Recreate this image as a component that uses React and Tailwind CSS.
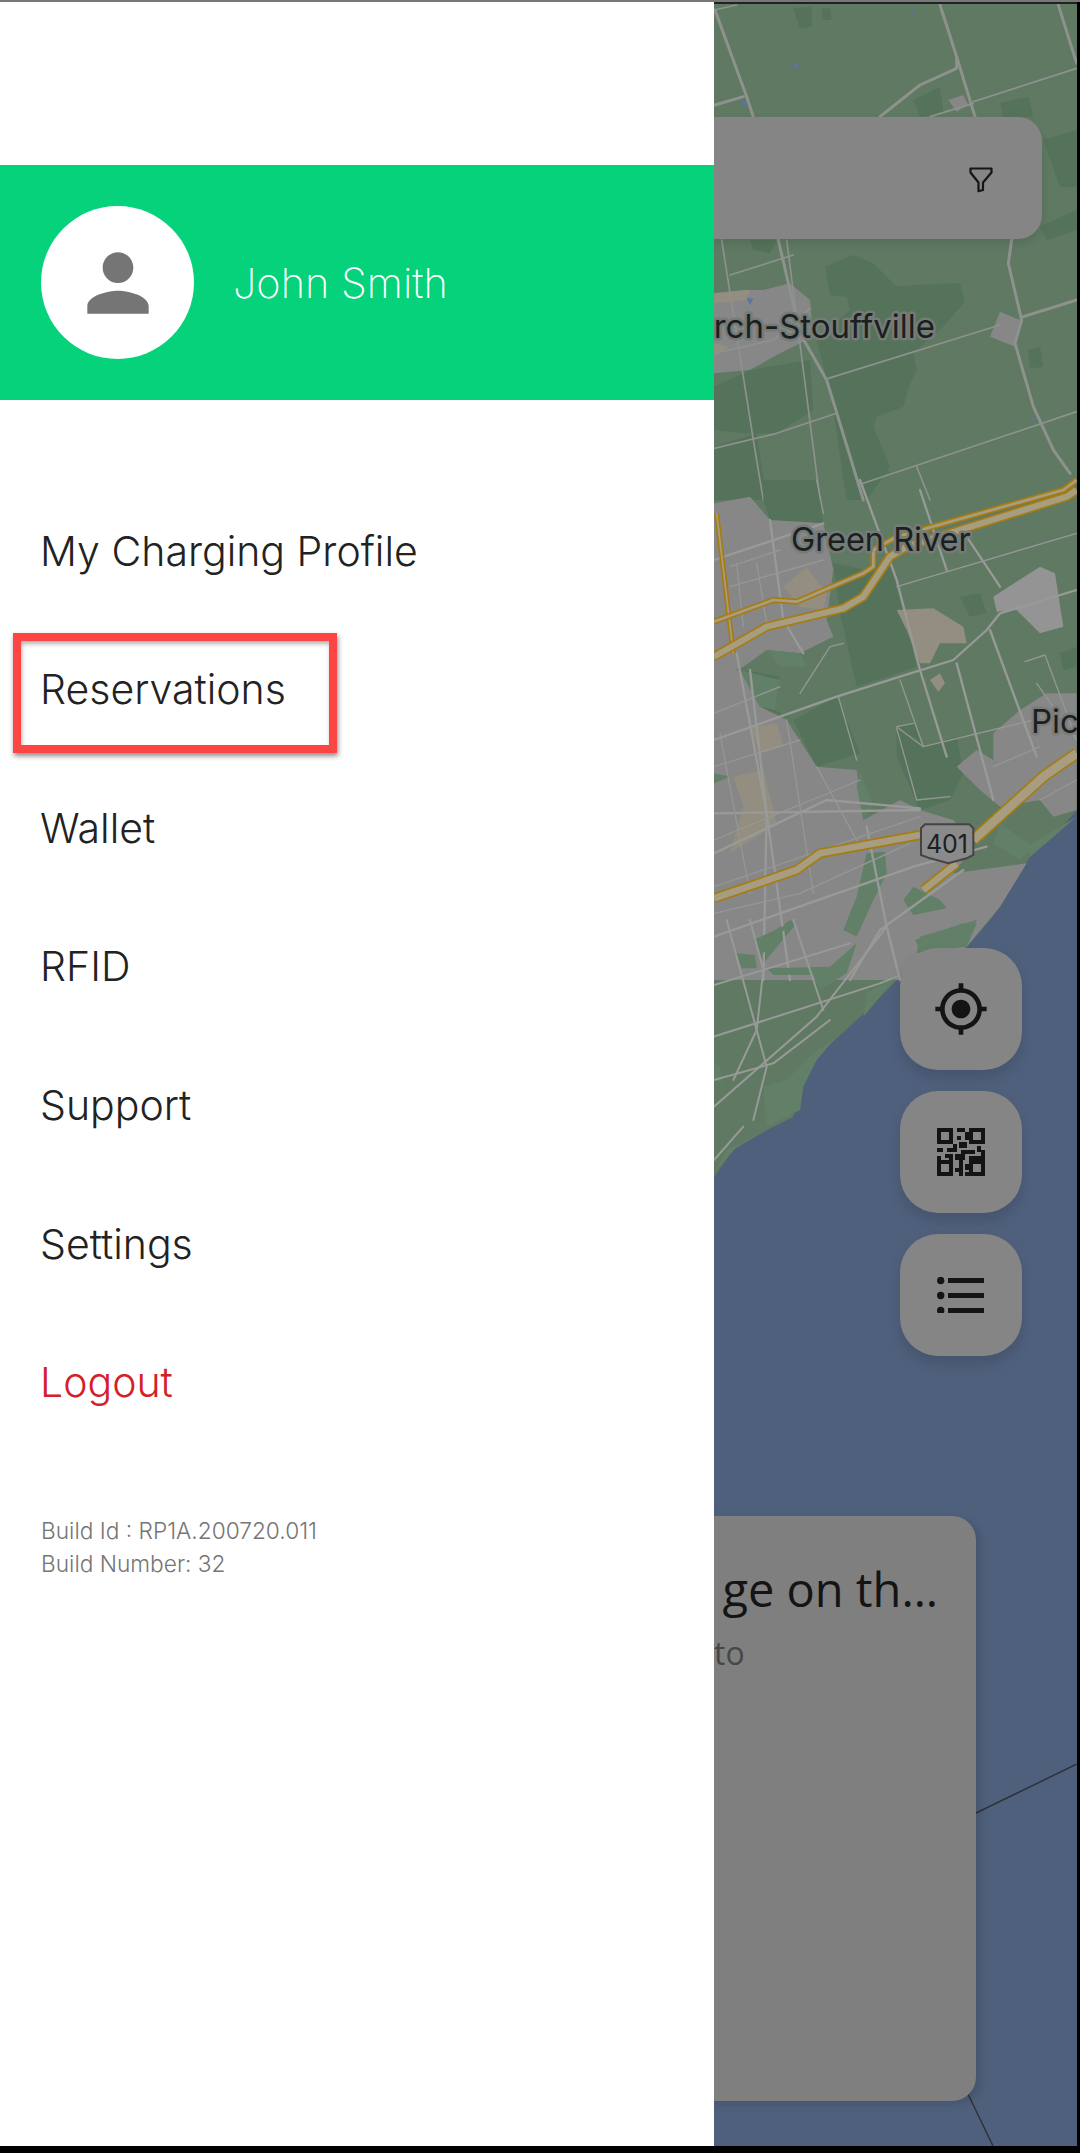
const GREEN_DARK = "#54735a";
const URBAN = "#868786";
const TAN = "#948e80";
const ROAD = "#8e928e";

const z2 = "translate(700,0) scale(0.33333)";
const z3 = "translate(700,480) scale(0.33333)";
const z4 = "translate(700,920) scale(0.33333)";

function Polys({ fill, items }) {
  return items.map((p, i) => <polygon key={i} points={p} fill={fill} />);
}
function Lines({ color, w, items }) {
  return items.map((p, i) => (
    <polyline key={i} points={p} fill="none" stroke={color} strokeWidth={w} strokeLinejoin="round" strokeLinecap="round" />
  ));
}
function Highway({ pts, w }) {
  return (
    <>
      <polyline points={pts} fill="none" stroke="#a67c12" strokeWidth={w} strokeLinejoin="round" />
      <polyline points={pts} fill="none" stroke="#a79e82" strokeWidth={w - 10} strokeLinejoin="round" />
    </>
  );
}

function MapArt() {
  return (
    <svg className="absolute inset-0" width="363" height="2144" viewBox="714 2 363 2144">
      <rect x="714" y="0" width="363" height="2153" fill="#5f7963" />
      <polygon points="714,1177 733,1150 767,1130 793,1117 800,1093 813,1060 860,1017 900,977 967,947 990,920 1000,907 1030,857 1053,837 1077,810 1077,2146 714,2146" fill="#4f607d" />

      <g transform={z2}>
        <Polys fill={GREEN_DARK} items={[
          "375,800 460,765 520,790 590,860 640,855 780,850 795,905 720,990 640,1060 650,1110 630,1150 610,1220 530,1250 520,1280 570,1400 500,1500 440,1500 400,1230 370,1100 350,1020 450,930 440,890 390,885",
          "42,1160 150,1110 330,1080 340,1230 230,1300 130,1300 42,1290",
          "42,1340 170,1300 200,1500 42,1500",
          "1030,420 1130,390 1130,560 1080,560",
          "1020,680 1130,630 1130,690 1040,720",
          "280,25 335,20 335,80 300,85",
          "365,25 390,25 395,60 370,60",
          "640,300 720,260 730,340 660,350",
          "900,310 985,290 1000,350 910,350",
          "985,1050 1020,1040 1030,1100 990,1105",
          "150,720 230,720 210,760 160,750",
          "490,1360 530,1350 570,1420 520,1430",
        ]} />
        <Polys fill={URBAN} items={[
          "42,880 130,870 190,870 270,850 330,900 340,1010 240,1060 150,1110 42,1120",
          "745,300 790,285 805,315 770,335",
          "870,1010 900,935 960,960 945,1040",
        ]} />
        <Polys fill={TAN} items={["42,880 150,870 140,900 42,910", "42,1030 85,1040 42,1070"]} />
        <Polys fill="#5b74a0" items={[
          "280,190 300,195 285,210", "125,300 145,310 130,325", "630,30 650,40 635,42", "140,895 160,895 150,915", "1000,1250 1010,1260 995,1265",
        ]} />
        <Lines color={ROAD} w={9} items={[
          "45,30 140,290 160,350",
          "720,15 770,170 825,350",
          "770,170 770,205 660,255 540,350",
          "45,315 130,290",
          "1075,15 1130,190",
          "235,720 300,1000 380,1140 490,1500",
          "935,720 925,790 965,960 945,1030 1000,1220 1060,1350 1110,1420",
          "970,950 1130,900",
        ]} />
        <Lines color={ROAD} w={5} items={[
          "820,305 1130,205",
          "690,350 820,310",
          "385,1135 900,975",
          "65,720 160,1320 190,1500",
          "260,720 360,1500",
          "90,825 280,765",
          "42,1345 230,1300 410,1240",
          "490,1450 1130,1235",
          "650,1400 690,1500",
          "42,30 110,15",
          "42,1060 220,1020 330,925",
        ]} />
      </g>

      <g transform={z3}>
        <Polys fill={GREEN_DARK} items={[
          "190,0 350,0 370,130 210,120 190,60",
          "400,250 500,270 570,240 650,560 470,620 420,400",
          "130,570 240,590 225,690 280,720 410,650 480,820 350,860 280,720 180,680",
          "590,740 640,730 670,800 770,770 790,880 750,960 660,990 590,830",
          "780,350 840,340 860,400 810,410",
          "1080,520 1130,500 1130,560 1090,570",
        ]} />
        <Polys fill={URBAN} items={[
          "42,70 150,50 210,120 370,130 400,270 380,420 400,470 300,520 200,510 130,560 42,600",
          "42,580 120,570 180,680 260,720 350,860 470,870 490,1020 600,960 660,990 760,1020 820,1100 760,1180 980,1150 900,1280 800,1400 640,1500 42,1500",
          "770,860 830,810 880,840 880,760 960,690 1040,640 1130,640 1130,990 1060,1010 1020,960 900,980 840,930",
        ]} />
        <Polys fill="#949494" items={["880,350 1020,260 1065,280 1090,440 1020,460 950,390 890,395"]} />
        <Polys fill={TAN} items={[
          "590,390 700,385 790,440 800,490 720,490 690,550 660,550 620,450",
          "690,600 720,580 735,610 715,635",
          "250,320 320,260 380,340 370,390 300,380",
          "150,740 230,730 250,800 180,820",
          "100,890 190,870 230,1030 90,1120 130,980",
        ]} />
        <Polys fill="#628067" items={[
          "42,880 90,890 42,910",
          "480,870 520,980 490,1020 470,920",
          "120,570 240,600 225,690 180,680",
          "200,510 300,520 320,560 240,560",
          "640,1220 720,1260 740,1285 640,1305 610,1260",
          "500,1120 555,1115 560,1180 520,1260 470,1370 430,1350 470,1250",
          "900,1030 1000,1100 960,1140 880,1090",
          "980,1100 1130,1010 1060,1070 990,1130",
          "660,1370 830,1320 790,1400 650,1420",
          "170,1390 270,1320 290,1330 190,1450",
        ]} />
        <Lines color="#989a98" w={7} items={[
          "480,0 590,300 660,570 740,830",
          "42,780 410,650 600,590 760,540 860,450 900,400 1130,330",
          "110,520 200,1000 270,1500",
          "42,240 370,130",
          "210,120 250,420 310,520",
          "42,1000 660,990",
          "42,1370 640,1160 860,1100",
          "800,170 900,320",
          "770,550 880,960",
          "870,450 1010,830",
          "450,1500 540,1350 790,1170",
          "500,1040 560,1340 600,1500",
          "150,570 200,1000 190,1500",
          "660,30 740,270",
          "42,1120 380,960 660,985",
        ]} />
        <Lines color="#959795" w={4} items={[
          "350,0 370,100",
          "590,320 1130,160",
          "415,650 470,840",
          "300,640 390,500 430,490",
          "600,600 670,800 1000,720",
          "670,800 590,740 640,730",
          "590,745 650,960 750,950",
          "975,545 1035,525 1130,780 1010,610",
          "42,700 240,620",
          "42,860 300,780",
          "42,1080 480,900",
          "42,1220 660,1010",
          "60,760 150,1240",
          "260,720 340,1240",
          "350,860 480,1100",
          "42,1300 300,1240 630,1090",
          "90,260 240,210",
          "90,320 370,240",
          "110,250 130,440",
          "170,250 200,430",
          "880,860 1020,800",
          "1020,960 1130,900",
        ]} />
        <Highway pts="50,100 100,520" w={15} />
        <Highway pts="42,425 220,360 290,365 490,280 520,260 520,210 590,170 1090,30 1130,0" w={18} />
        <Highway pts="42,530 200,440 430,385 490,350 570,230 620,200 1100,50 1130,30" w={28} />
        <Highway pts="42,1255 290,1170 360,1120 660,1065" w={30} />
        <Highway pts="820,1080 1030,890 1130,820" w={36} />
        <Highway pts="770,1150 670,1230" w={30} />
        <polygon points="663,1045 675,1033 808,1033 820,1045 820,1125 800,1135 745,1150 690,1135 663,1125" fill="#8a8a8a" stroke="#444" strokeWidth="6" />
      </g>

      <g transform={z4}>
        <Polys fill="#628067" items={[
          "106,100 165,105 170,145 125,145",
          "200,145 390,140 470,70 440,160 360,210 340,165 220,165",
          "160,60 270,10 190,100",
          "645,60 790,10 830,10 800,80 660,90",
          "490,290 590,170 500,220",
          "340,400 410,350 350,420 310,500 300,570 200,620 190,500 260,480",
          "42,430 60,440 65,490 42,480",
          "42,760 110,680 190,635 80,690",
        ]} />
        <Lines color="#989a98" w={6} items={[
          "42,350 540,190 590,170",
          "42,195 450,70",
          "80,0 200,440 160,600",
          "150,0 190,150 170,330 100,480",
          "280,0 370,270",
          "42,560 350,290 560,20",
          "42,720 130,620",
          "42,480 220,430 390,300",
        ]} />
      </g>

      <text x="935" y="338" textAnchor="end" fontFamily="Inter, sans-serif" fontSize="33" fill="#1b1f20" stroke="#757b77" strokeWidth="5" paintOrder="stroke" strokeLinejoin="round">hitchurch-Stouffville</text>
      <text x="791" y="551" fontFamily="Inter, sans-serif" fontSize="32.5" fill="#1b1f20" stroke="#757b77" strokeWidth="5" paintOrder="stroke" strokeLinejoin="round">Green River</text>
      <text x="1031" y="733" fontFamily="Inter, sans-serif" fontSize="33" fill="#1b1f20" stroke="#7b7d7b" strokeWidth="5" paintOrder="stroke" strokeLinejoin="round">Pickering</text>
      <text x="947" y="853" textAnchor="middle" fontFamily="Inter, sans-serif" fontSize="25" fill="#1b1f20">401</text>

      <line x1="976" y1="1813" x2="1077" y2="1764" stroke="#2e3238" strokeWidth="1.5" />
      <line x1="968" y1="2094" x2="993" y2="2146" stroke="#2e3238" strokeWidth="1.5" />
    </svg>
  );
}

function QrIcon() {
  const cells = [
    "10,0 4,2", "10,4 2,2", "14,2 2,4", "11,7 4,3", "0,10 3,2", "5,10 5,2", "12,11 7,2", "20,9 2,3", "22,11 2,4",
    "0,14 2,3", "4,13 4,2", "9,13 5,3", "16,14 8,2", "2,16 4,2", "11,16 2,8", "14,18 2,3", "9,20 2,2", "14,22 4,2", "8,8 2,4", "6,15 2,3",
  ];
  return (
    <svg width="48" height="48" viewBox="0 0 24 24" fill="#141414">
      <path fillRule="evenodd" d="M0 0h8v8H0zM2 2v4h4V2zM16 0h8v8h-8zM18 2v4h4V2zM0 16h8v8H0zM2 18v4h4v-4zM16 16h8v8h-8zM18 18v4h4v-4z" />
      {cells.map((c, i) => {
        const [xy, wh] = c.split(" ");
        const [x, y] = xy.split(",");
        const [w, h] = wh.split(",");
        return <rect key={i} x={x} y={y} width={w} height={h} />;
      })}
    </svg>
  );
}

function ListIcon() {
  return (
    <svg width="48" height="36" viewBox="0 0 48 36" fill="#141414">
      <circle cx="3.7" cy="3.5" r="3.7" />
      <circle cx="3.7" cy="18.5" r="3.7" />
      <circle cx="3.7" cy="33.5" r="2.5" />
      <circle cx="3.7" cy="33.5" r="3.7" />
      <rect x="11" y="1" width="36" height="5" />
      <rect x="11" y="16" width="36" height="5" />
      <rect x="11" y="31" width="36" height="5" />
    </svg>
  );
}

function MapButton({ children }) {
  return (
    <div className="flex h-[122px] w-[122px] items-center justify-center rounded-[38px] bg-[#858585] shadow-[0_8px_14px_rgba(0,0,0,0.12)]">
      {children}
    </div>
  );
}

const sans = "font-['Inter','Liberation_Sans',sans-serif]";

const items = ["My Charging Profile", "Reservations", "Wallet", "RFID", "Support", "Settings"];

export default function App() {
  return (
    <div className={`flex h-[2153px] w-[1080px] flex-col overflow-hidden bg-black ${sans}`}>
      <div className="h-[2px] bg-[#777777]" />
      <div className="flex min-h-0 flex-1">
        <aside className="relative w-[714px] shrink-0 bg-white">
          <div className="h-[163px]" />
          <div className="flex h-[235px] items-center bg-[#05d27a] pl-[41px]">
            <div className="flex h-[153px] w-[153px] items-center justify-center rounded-full bg-white">
              <svg width="92" height="92" viewBox="0 0 24 24" fill="#757575">
                <path d="M12 12c2.21 0 4-1.79 4-4s-1.79-4-4-4-4 1.79-4 4 1.79 4 4 4zm0 2c-2.67 0-8 1.34-8 4v2h16v-2c0-2.66-5.33-4-8-4z" />
              </svg>
            </div>
            <span className="mt-[2px] ml-[39px] text-[41.5px] font-extralight text-white">John Smith</span>
          </div>
          <nav className="flex flex-col pt-[82px] pl-[40px]">
            {items.map((t) => (
              <div key={t} className="flex h-[138.6px] items-center text-[41px] font-light text-[#222222]">
                {t}
              </div>
            ))}
            <div className="flex h-[138.6px] items-center text-[41px] font-light text-[#d42027]">Logout</div>
          </nav>
          <div className="pt-[62px] pl-[41px] text-[22.7px] leading-[33px] font-light text-[#757575]">
            <div>Build Id : RP1A.200720.011</div>
            <div>Build Number: 32</div>
          </div>
          <div className="absolute top-[631px] left-[13px] h-[120px] w-[324px] border-8 border-[#ff4444] shadow-[1px_3px_5px_rgba(0,0,0,0.45),inset_1px_3px_4px_rgba(0,0,0,0.3)]" />
        </aside>

        <main className="relative min-w-0 flex-1 overflow-hidden border-r-[3px] border-black">
          <MapArt />
          <div className="absolute top-[0px] left-0 h-[2px] w-full bg-[#222222]" />

          <div className="absolute top-[115px] right-[35px] left-[-40px] flex h-[122px] items-center justify-end rounded-[24px] bg-[#858585] pr-[49px] shadow-[0_4px_10px_rgba(0,0,0,0.1)]">
            <svg className="mt-[4px]" width="24" height="26" viewBox="0 0 24 26" fill="none" stroke="#151515" strokeWidth="2.2" strokeLinejoin="round">
              <path d="M1.5 1.5h21v4L14 15.5V23l-4.5 1.2v-8.7L1.5 5.5z" />
            </svg>
          </div>

          <div className="absolute top-[946px] right-[55px] flex flex-col gap-[21px]">
            <MapButton>
              <svg width="56" height="56" viewBox="0 0 24 24" fill="#141414">
                <path d="M12 8c-2.21 0-4 1.79-4 4s1.79 4 4 4 4-1.79 4-4-1.79-4-4-4zm8.94 3c-.46-4.17-3.77-7.48-7.94-7.94V1h-2v2.06C6.83 3.52 3.52 6.83 3.06 11H1v2h2.06c.46 4.17 3.77 7.48 7.94 7.94V23h2v-2.06c4.17-.46 7.48-3.77 7.94-7.94H23v-2h-2.06zM12 19c-3.87 0-7-3.13-7-7s3.13-7 7-7 7 3.13 7 7-3.13 7-7 7z" />
              </svg>
            </MapButton>
            <MapButton>
              <QrIcon />
            </MapButton>
            <MapButton>
              <ListIcon />
            </MapButton>
          </div>

          <div className="absolute top-[1514px] right-[101px] h-[585px] w-[300px] rounded-[24px] bg-[#7f7f7f] shadow-[5px_3px_8px_rgba(0,0,0,0.12)]">
            <div className="absolute top-[43px] right-[38px] font-['Open_Sans',sans-serif] text-[47px] leading-[60px] whitespace-nowrap text-[#141414]">
              ge on th…
            </div>
            <div className="absolute top-[115px] left-[38px] font-['Open_Sans',sans-serif] text-[32px] leading-[44px] text-[#474747]">
              to
            </div>
          </div>
        </main>
      </div>
      <div className="h-[7px] bg-black" />
    </div>
  );
}
